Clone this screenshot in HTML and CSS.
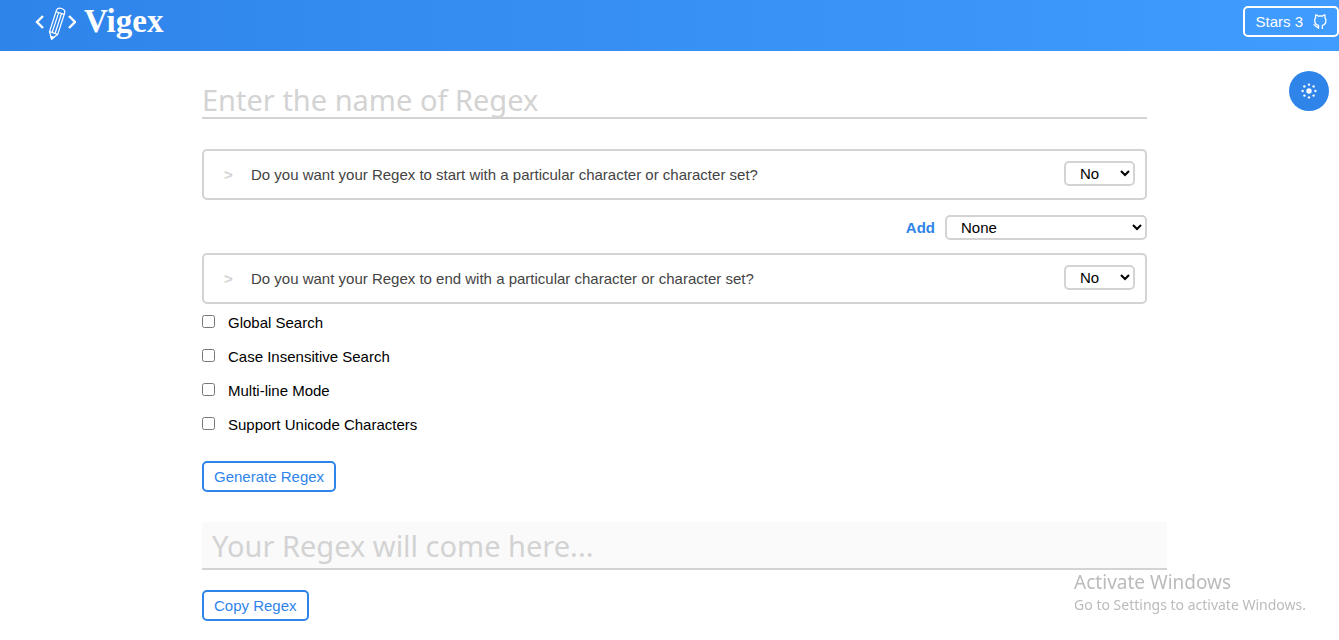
FILE: index.html
```
<!DOCTYPE html>
<html lang="en">
<head>
  <meta charset="UTF-8" />
  <meta name="viewport" content="width=device-width, initial-scale=1.0" />
  <title>Vigex</title>
  <link rel="stylesheet" href="styles.css">
</head>
<body>

  <!-- Navbar -->
  <header class="navbar">
    <a class="brand" href="#">
      <svg class="logo" viewBox="0 0 42 36" fill="none" stroke="#fff">
        <path d="M9 10 3 16l6 6M35 10l6 6-6 6" stroke-width="2.400" />
        <g transform="translate(22.700 17.500) rotate(18)" stroke-width="1.200">
          <path d="M-4.300 10V-12.500Q-4.300-15.800 0-15.800T4.300-12.500V10L0 16.500z" />
          <path d="M-4.300-11H4.300M-4.300 10H4.300M-1.500-11V10M1.500-11V10" />
          <path d="M-1.500 14 0 16.500 1.500 14z" fill="#fff" />
        </g>
      </svg>
      <span class="brand-name">Vigex</span>
    </a>
    <button class="stars" type="button">
      Stars 3
      <svg class="github" viewBox="0 0 14 16" fill="none" stroke="#fff" stroke-width="1.300">
        <path d="M5.500 15v-3.700C2.800 10.800 1.700 9.200 1.700 6.500c0-1 .3-1.900.9-2.600-.2-.9-.1-1.900.2-2.900 1 .1 1.900.6 2.700 1.200 1.200-.3 2.400-.3 3.600 0C9.900 1.600 10.800 1.100 11.800 1c.3 1 .4 2 .2 2.900.6.700.9 1.600.9 2.600 0 2.700-1.100 4.300-3.500 4.800V15M5.500 13.200c-3 .4-2.700-2-5-2.700" />
      </svg>
    </button>
  </header>

  <button class="theme-btn" type="button" aria-label="Toggle theme">
    <svg class="sun" viewBox="0 0 16 16" fill="#fff">
      <circle cx="8" cy="8" r="2.700" />
      <circle cx="8" cy="1.600" r="1.200" />
      <circle cx="12.600" cy="3.400" r="1.200" />
      <circle cx="14.400" cy="8" r="1.200" />
      <circle cx="12.600" cy="12.600" r="1.200" />
      <circle cx="8" cy="14.400" r="1.200" />
      <circle cx="3.400" cy="12.600" r="1.200" />
      <circle cx="1.600" cy="8" r="1.200" />
      <circle cx="3.400" cy="3.400" r="1.200" />
    </svg>
  </button>

  <!-- Regex form -->
  <main class="container">
    <input class="regex-name" type="text" placeholder="Enter the name of Regex" aria-label="Name of Regex">

    <div class="question">
      <span class="arrow">&gt;</span>
      <label class="question-text" for="startWith">Do you want your Regex to start with a particular character or character set?</label>
      <select class="select" id="startWith">
        <option>No</option>
        <option>Yes</option>
      </select>
    </div>

    <div class="add-row">
      <label class="add" for="addRule">Add</label>
      <select class="select select-wide" id="addRule">
        <option>None</option>
      </select>
    </div>

    <div class="question">
      <span class="arrow">&gt;</span>
      <label class="question-text" for="endWith">Do you want your Regex to end with a particular character or character set?</label>
      <select class="select" id="endWith">
        <option>No</option>
        <option>Yes</option>
      </select>
    </div>

    <div class="flags">
      <label class="flag"><input class="check" type="checkbox"><span>Global Search</span></label>
      <label class="flag"><input class="check" type="checkbox"><span>Case Insensitive Search</span></label>
      <label class="flag"><input class="check" type="checkbox"><span>Multi-line Mode</span></label>
      <label class="flag"><input class="check" type="checkbox"><span>Support Unicode Characters</span></label>
    </div>

    <button class="btn" type="button">Generate Regex</button>
    <input class="output" type="text" placeholder="Your Regex will come here..." aria-label="Generated Regex" readonly>
    <button class="btn" type="button">Copy Regex</button>
  </main>

  <!-- Notice -->
  <div class="notice">
    <div class="notice-title">Activate Windows</div>
    <div class="notice-text">Go to Settings to activate Windows.</div>
  </div>

</body>
</html>
```

FILE: styles.css
```
* {
  box-sizing: border-box;
}

body {
  margin: 0;
  background: white;
  color: black;
  font-family: "Liberation Sans", Arial, sans-serif;
  font-size: 15px;
}

button, select {
  font-family: inherit;
  font-size: 15px;
}

button {
  cursor: pointer;
}

.navbar {
  display: flex;
  justify-content: space-between;
  align-items: flex-start;
  height: 51px;
  padding: 6px 0 0 34px;
  background: linear-gradient(to right, #2f84ea, #409cff);
}

.brand {
  display: flex;
  gap: 8px;
  color: white;
  text-decoration: none;
}

.logo {
  width: 42px;
  height: 36px;
}

.brand-name {
  font-family: "Liberation Serif", serif;
  font-size: 33px;
  font-weight: bold;
  line-height: 30px;
}

.stars {
  display: flex;
  align-items: center;
  gap: 10px;
  height: 31px;
  padding: 0 10px;
  border: 2px solid white;
  border-radius: 5px;
  background: transparent;
  color: white;
}

.github {
  width: 14px;
  height: 16px;
}

.theme-btn {
  position: fixed;
  top: 71px;
  right: 10px;
  display: flex;
  align-items: center;
  justify-content: center;
  width: 40px;
  height: 40px;
  padding: 0;
  border: none;
  border-radius: 50%;
  background: #2f84ea;
}

.sun {
  width: 16px;
  height: 16px;
}

.container {
  margin: 0 192px 0 202px;
  padding-top: 30px;
}

.regex-name, .output {
  display: block;
  border: none;
  border-bottom: 2px solid lightgray;
  outline: none;
  font-family: "Noto Sans", Tahoma, sans-serif;
  font-size: 29px;
}

.regex-name::placeholder, .output::placeholder {
  color: lightgray;
}

.regex-name {
  width: 100%;
  height: 38px;
  margin-bottom: 30px;
  padding: 0;
}

.question {
  display: flex;
  align-items: flex-start;
  height: 51px;
  padding: 10px;
  border: 2px solid lightgray;
  border-radius: 5px;
  line-height: 27px;
}

.arrow {
  width: 37px;
  padding-left: 10px;
  color: lightgray;
  font-weight: bold;
}

.question-text {
  flex: 1;
  color: #444;
}

.select {
  width: 71px;
  height: 25px;
  padding: 0 0 0 10px;
  border: 2px solid lightgray;
  border-radius: 5px;
  background: white;
  color: black;
}

.select-wide {
  width: 202px;
}

.add-row {
  display: flex;
  justify-content: flex-end;
  align-items: center;
  gap: 10px;
  padding: 15px 0 13px;
}

.add {
  color: #2f84ea;
  font-weight: bold;
}

.flags {
  display: flex;
  flex-direction: column;
  align-items: flex-start;
  gap: 14px;
  margin: 9px 0 26px;
}

.flag {
  display: flex;
  gap: 13px;
  line-height: 20px;
}

.check {
  width: 13px;
  height: 13px;
  margin: 2px 0 0;
}

.btn {
  display: block;
  height: 31px;
  padding: 0 10px;
  border: 2px solid #2f84ea;
  border-radius: 5px;
  background: white;
  color: #2f84ea;
}

.output {
  width: calc(100% + 20px);
  height: 48px;
  margin: 30px 0 20px;
  padding: 0 10px;
  background: #fafafa;
}

/* sits over the page in the bottom right corner */
.notice {
  position: fixed;
  right: 33px;
  bottom: 25px;
  color: #bbb;
  font-family: "Noto Sans", "Segoe UI", sans-serif;
}

.notice-title {
  font-size: 19px;
  line-height: 25px;
}

.notice-text {
  font-size: 14px;
  line-height: 20px;
}
```
